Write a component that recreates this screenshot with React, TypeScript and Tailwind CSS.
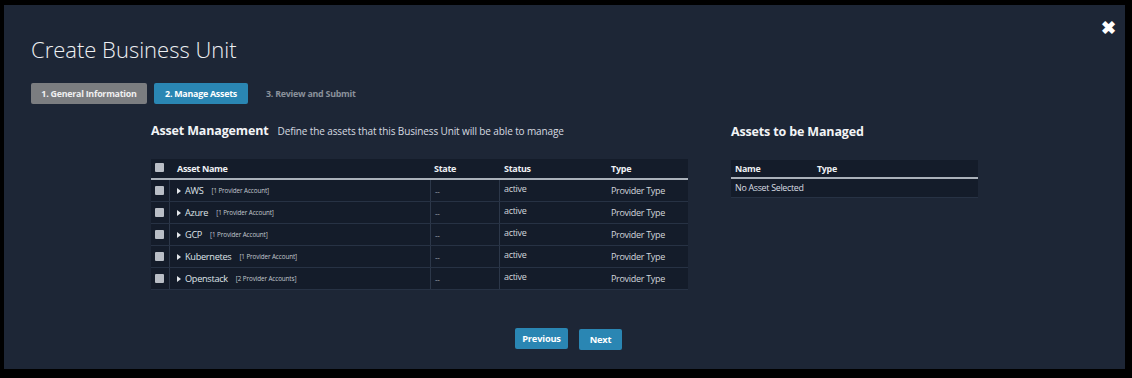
import React from "react";

const assets = [
  { name: "AWS", count: "[1 Provider Account]" },
  { name: "Azure", count: "[1 Provider Account]" },
  { name: "GCP", count: "[1 Provider Account]" },
  { name: "Kubernetes", count: "[1 Provider Account]" },
  { name: "Openstack", count: "[2 Provider Accounts]" },
];

const Box = () => (
  <span className="block w-[9px] h-[9px] rounded-[1px] bg-[#b9bec6]" />
);

const App = () => {
  return (
    <div
      className="w-[1132px] h-[378px] bg-black pt-[5px] pl-[4px]"
      style={{ fontFamily: '"Open Sans", "Liberation Sans", sans-serif' }}
    >
      <div className="relative w-[1121px] h-[364px] bg-[#1d2636] text-[#e4e7eb]">
        {/* close */}
        <span className="absolute right-[9px] top-[13px] text-white text-[18px] font-bold leading-none">
          ✖
        </span>

        <div className="pl-[27px] pt-[29px]">
          <h1 className="text-[22px] font-light leading-[30px] text-[#eef0f3]">
            Create Business Unit
          </h1>

          <div className="flex items-center gap-[7px] mt-[19px] text-[8.9px] tracking-[-0.25px] font-bold">
            <div className="h-[21px] w-[116px] rounded-[2px] bg-[#7b7d80] text-[#f0f0f0] flex items-center justify-center">
              1. General Information
            </div>
            <div className="h-[21px] w-[94px] rounded-[2px] bg-[#2a86b3] text-white flex items-center justify-center">
              2. Manage Assets
            </div>
            <div className="ml-[11px] text-[#8a919b]">3. Review and Submit</div>
          </div>
        </div>

        <div className="flex mt-[18px]">
          {/* asset management */}
          <div className="ml-[147px] w-[537px]">
            <div className="flex items-baseline h-[21px]">
              <span className="text-[12.5px] tracking-[-0.15px] font-bold text-[#f2f4f6]">Asset Management</span>
              <span className="ml-[9px] text-[10px] tracking-[-0.12px] text-[#d6dae0]">
                Define the assets that this Business Unit will be able to manage
              </span>
            </div>

            <div className="mt-[16px] bg-[#141c2a] text-[9px] tracking-[-0.3px]">
              <div className="grid grid-cols-[19px_261px_69px_107px_81px] h-[21px] items-center font-bold text-[#eef0f3] border-b-2 border-[#aab1ba]">
                <div className="pl-[4px] -mt-[2px]"><Box /></div>
                <div className="pl-[7px]">Asset Name</div>
                <div className="pl-[3px]">State</div>
                <div className="pl-[4px]">Status</div>
                <div className="pl-[4px]">Type</div>
              </div>
              {assets.map((a) => (
                <div
                  key={a.name}
                  className="grid grid-cols-[19px_261px_69px_107px_81px] h-[22px] border-b border-[#273244]"
                >
                  <div className="pl-[4px] flex items-center border-r border-[#2c3749]"><Box /></div>
                  <div className="pl-[7px] flex items-center gap-[4px] border-r border-[#2c3749]">
                    <svg width="4" height="6" viewBox="0 0 4 6">
                      <path d="M0 0 L4 3 L0 6 Z" fill="#e4e7eb" />
                    </svg>
                    <span className="text-[9.2px] text-[#dfe3e8]">{a.name}</span>
                    <span className="ml-[4px] text-[6.3px] tracking-[-0.1px] text-[#c3c8cf]">{a.count}</span>
                  </div>
                  <div className="pl-[4px] pt-[5px] text-[8px] text-[#a9b0ba] border-r border-[#2c3749]">--</div>
                  <div className="pl-[4px] pt-[2px] text-[#d2d6dc]">active</div>
                  <div className="pl-[4px] flex items-center text-[#d2d6dc]">Provider Type</div>
                </div>
              ))}
            </div>
          </div>

          {/* assets to be managed */}
          <div className="ml-[43px] w-[247px]">
            <div className="h-[21px] flex items-center text-[12.5px] tracking-[-0.15px] font-bold text-[#f2f4f6]">
              Assets to be Managed
            </div>
            <div className="mt-[17px] bg-[#141c2a] text-[8.9px] tracking-[-0.3px]">
              <div className="flex h-[19px] items-center font-bold text-[#eef0f3] border-b-2 border-[#aab1ba]">
                <span className="pl-[4px] w-[86px]">Name</span>
                <span>Type</span>
              </div>
              <div className="h-[19px] flex items-center pl-[4px] text-[#d9dde2] border-b border-[#273244]">
                No Asset Selected
              </div>
            </div>
          </div>
        </div>

        <div className="flex justify-center gap-[11px] mt-[38px] ml-[8px] text-[9.3px] tracking-[-0.2px] font-bold text-white">
          <button className="h-[21px] w-[53px] rounded-[2px] bg-[#2a86b3]">Previous</button>
          <button className="h-[21px] w-[43px] mt-[1px] rounded-[2px] bg-[#2a86b3]">Next</button>
        </div>
      </div>
    </div>
  );
};

export default App;
